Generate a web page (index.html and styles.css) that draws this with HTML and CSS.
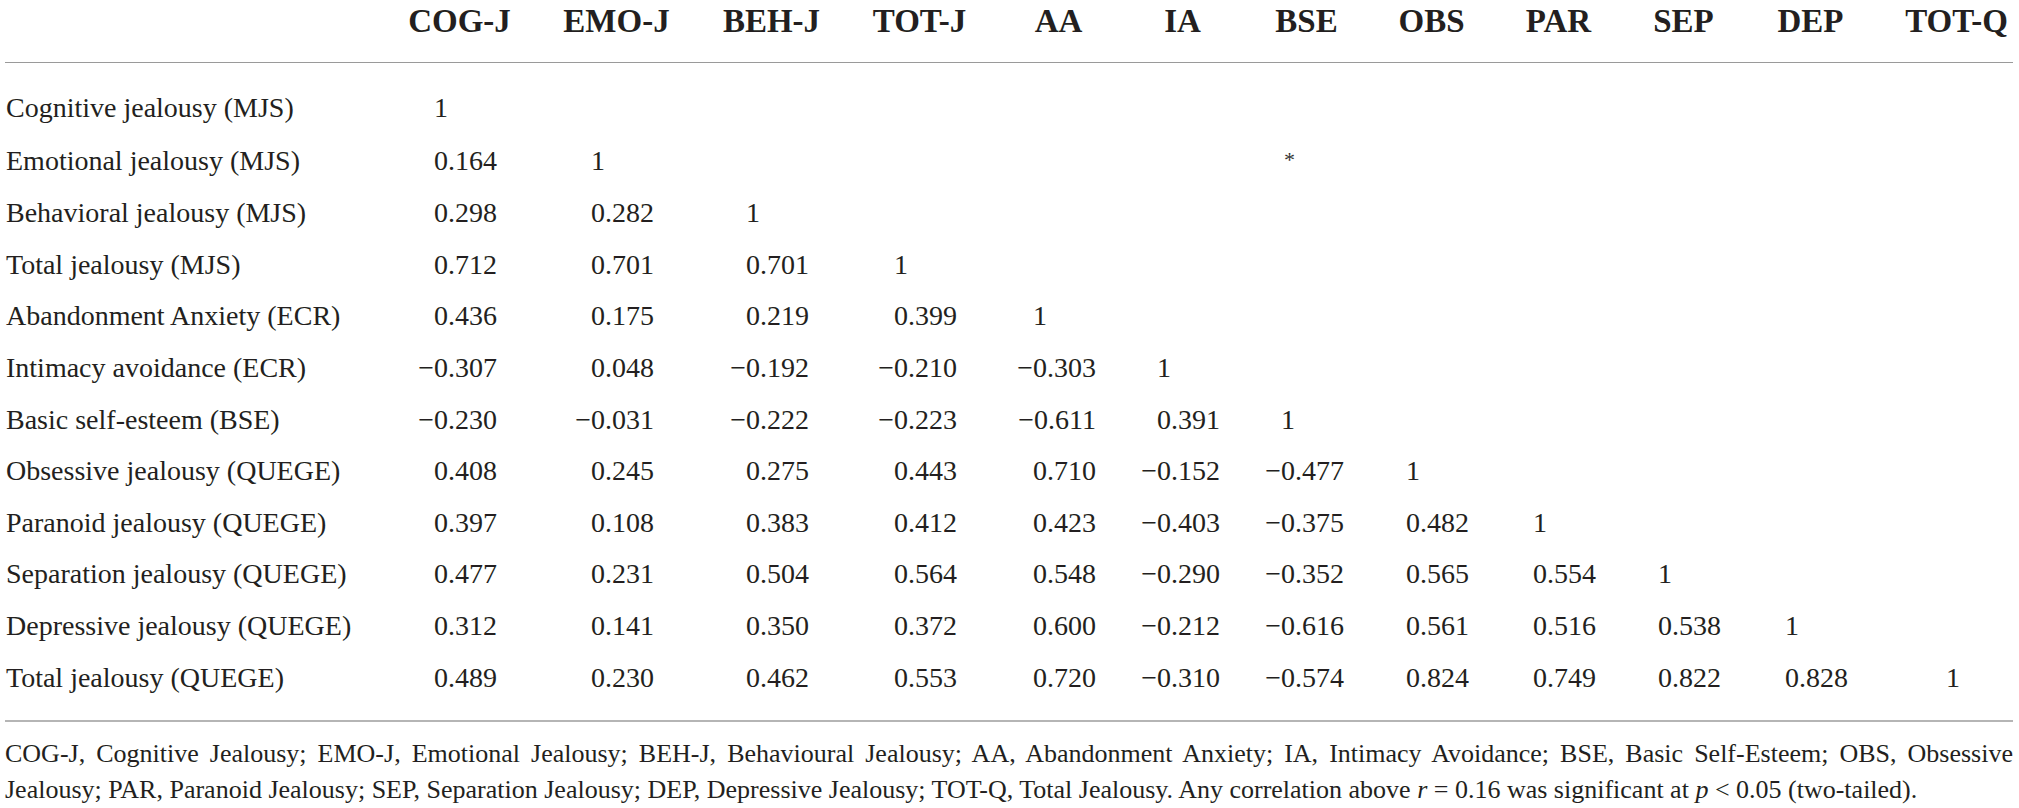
FILE: index.html
```html
<!DOCTYPE html>
<html lang="en">
<head>
    <meta charset="UTF-8">
    <meta name="viewport" content="width=device-width, initial-scale=1.0">
    <title>Correlations between jealousy, attachment and self-esteem</title>
    <link rel="stylesheet" href="styles.css">
</head>
<body>
    <div class="page">
        <table class="corr">
            <colgroup>
                <col class="c-label">
                <col class="c-cog">
                <col class="c-emo">
                <col class="c-beh">
                <col class="c-totj">
                <col class="c-aa">
                <col class="c-ia">
                <col class="c-bse">
                <col class="c-obs">
                <col class="c-par">
                <col class="c-sep">
                <col class="c-dep">
                <col class="c-totq">
            </colgroup>
            <thead>
                <tr>
                    <th></th>
                    <th><span>COG-J</span></th>
                    <th><span>EMO-J</span></th>
                    <th><span>BEH-J</span></th>
                    <th><span>TOT-J</span></th>
                    <th><span>AA</span></th>
                    <th><span>IA</span></th>
                    <th><span>BSE</span></th>
                    <th><span>OBS</span></th>
                    <th><span>PAR</span></th>
                    <th><span>SEP</span></th>
                    <th><span>DEP</span></th>
                    <th class="last"><span>TOT-Q</span></th>
                </tr>
            </thead>
            <tbody>
                <tr>
                    <td>Cognitive jealousy (MJS)</td>
                    <td class="one">1</td><td></td><td></td><td></td><td></td><td></td><td></td><td></td><td></td><td></td><td></td><td></td>
                </tr>
                <tr>
                    <td>Emotional jealousy (MJS)</td>
                    <td>0.164</td><td class="one">1</td><td></td><td></td><td></td><td></td>
                    <td><span class="sig">*</span></td>
                    <td></td><td></td><td></td><td></td><td></td>
                </tr>
                <tr>
                    <td>Behavioral jealousy (MJS)</td>
                    <td>0.298</td><td>0.282</td><td class="one">1</td><td></td><td></td><td></td><td></td><td></td><td></td><td></td><td></td><td></td>
                </tr>
                <tr>
                    <td>Total jealousy (MJS)</td>
                    <td>0.712</td><td>0.701</td><td>0.701</td><td class="one">1</td><td></td><td></td><td></td><td></td><td></td><td></td><td></td><td></td>
                </tr>
                <tr>
                    <td>Abandonment Anxiety (ECR)</td>
                    <td>0.436</td><td>0.175</td><td>0.219</td><td>0.399</td><td class="one">1</td><td></td><td></td><td></td><td></td><td></td><td></td><td></td>
                </tr>
                <tr>
                    <td>Intimacy avoidance (ECR)</td>
                    <td>&minus;0.307</td><td>0.048</td><td>&minus;0.192</td><td>&minus;0.210</td><td>&minus;0.303</td><td class="one">1</td><td></td><td></td><td></td><td></td><td></td><td></td>
                </tr>
                <tr>
                    <td>Basic self-esteem (BSE)</td>
                    <td>&minus;0.230</td><td>&minus;0.031</td><td>&minus;0.222</td><td>&minus;0.223</td><td>&minus;0.611</td><td>0.391</td><td class="one">1</td><td></td><td></td><td></td><td></td><td></td>
                </tr>
                <tr>
                    <td>Obsessive jealousy (QUEGE)</td>
                    <td>0.408</td><td>0.245</td><td>0.275</td><td>0.443</td><td>0.710</td><td>&minus;0.152</td><td>&minus;0.477</td><td class="one">1</td><td></td><td></td><td></td><td></td>
                </tr>
                <tr>
                    <td>Paranoid jealousy (QUEGE)</td>
                    <td>0.397</td><td>0.108</td><td>0.383</td><td>0.412</td><td>0.423</td><td>&minus;0.403</td><td>&minus;0.375</td><td>0.482</td><td class="one">1</td><td></td><td></td><td></td>
                </tr>
                <tr>
                    <td>Separation jealousy (QUEGE)</td>
                    <td>0.477</td><td>0.231</td><td>0.504</td><td>0.564</td><td>0.548</td><td>&minus;0.290</td><td>&minus;0.352</td><td>0.565</td><td>0.554</td><td class="one">1</td><td></td><td></td>
                </tr>
                <tr>
                    <td>Depressive jealousy (QUEGE)</td>
                    <td>0.312</td><td>0.141</td><td>0.350</td><td>0.372</td><td>0.600</td><td>&minus;0.212</td><td>&minus;0.616</td><td>0.561</td><td>0.516</td><td>0.538</td><td class="one">1</td><td></td>
                </tr>
                <tr>
                    <td>Total jealousy (QUEGE)</td>
                    <td>0.489</td><td>0.230</td><td>0.462</td><td>0.553</td><td>0.720</td><td>&minus;0.310</td><td>&minus;0.574</td><td>0.824</td><td>0.749</td><td>0.822</td><td>0.828</td><td class="solo">1</td>
                </tr>
            </tbody>
        </table>

        <p class="note">COG-J, Cognitive Jealousy; EMO-J, Emotional Jealousy; BEH-J, Behavioural Jealousy; AA, Abandonment Anxiety; IA, Intimacy Avoidance; BSE, Basic Self-Esteem; OBS, Obsessive Jealousy; PAR, Paranoid Jealousy; SEP, Separation Jealousy; DEP, Depressive Jealousy; TOT-Q, Total Jealousy. Any correlation above <i>r</i> = 0.16 was significant at <i>p</i> &lt; 0.05 (two-tailed).</p>
    </div>
</body>
</html>
```

FILE: styles.css
```css
body {
    margin: 0;
    background: #ffffff;
    color: #231f20;
    font-family: 'Liberation Serif', 'Times New Roman', serif;
}
.page {
    margin-left: 5px;
    width: 2008px;
}
.corr {
    width: 2008px;
    table-layout: fixed;
    border-collapse: collapse;
}
.c-label { width: 395px; }
.c-cog { width: 97px; }
.c-emo { width: 157px; }
.c-beh { width: 155px; }
.c-totj { width: 148px; }
.c-aa { width: 139px; }
.c-ia { width: 124px; }
.c-bse { width: 124px; }
.c-obs { width: 125px; }
.c-par { width: 127px; }
.c-sep { width: 125px; }
.c-dep { width: 127px; }
.c-totq { width: 165px; }

/* header */
.corr th {
    padding: 0 0 20px;
    font-size: 33px;
    line-height: 42px;
    font-weight: bold;
    text-align: right;
    vertical-align: top;
    white-space: nowrap;
    border-bottom: 1px solid #9a9a9a;
}
.corr th span {
    display: inline-flex;
    justify-content: center;
    width: 75px;
}
.corr th.last span {
    margin-right: 19px;
}

/* body rows */
.corr td {
    padding: 0;
    font-size: 28px;
    line-height: 51.6px;
    text-align: right;
    white-space: nowrap;
}
.corr td:first-child {
    text-align: left;
    padding-left: 1px;
}
.corr tbody tr:first-child td {
    padding-top: 19px;
}
.corr tbody tr:last-child td {
    padding-bottom: 17px;
    border-bottom: 2px solid #b5b5b5;
}
.corr td.one {
    padding-right: 49px;
}
.corr td.solo {
    padding-right: 53px;
}
.sig {
    display: inline-block;
    margin-right: 49px;
    font-size: 22px;
    vertical-align: 4px;
    color: #333;
}

/* footnote */
.note {
    margin: 14px 0 0;
    font-size: 26px;
    line-height: 36px;
    text-align: justify;
}
```
